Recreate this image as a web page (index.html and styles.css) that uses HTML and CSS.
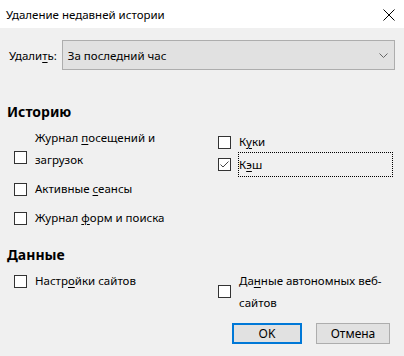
FILE: index.html
```html
<!DOCTYPE html>
<html lang="ru">
<head>
<meta charset="UTF-8" />
<title>Удаление недавней истории</title>
<link rel="stylesheet" href="styles.css">
</head>
<body>

<div class="titlebar">
  <span class="title">Удаление недавней истории</span>
  <svg class="close" width="12" height="12" viewBox="0 0 12 12">
    <path d="M0.5 0.5L11.5 11.5M11.5 0.5L0.5 11.5" stroke="#000" stroke-width="1" fill="none"/>
  </svg>
</div>

<div class="dialog">
  <div class="range-row">
    <span class="range-label">Удали<u>т</u>ь:</span>
    <div class="select">
      <span>За последний час</span>
      <svg class="chevron" width="9" height="5" viewBox="0 0 9 5">
        <path d="M0.5 0.5L4.5 4.5L8.5 0.5" stroke="#666" stroke-width="1" fill="none"/>
      </svg>
    </div>
  </div>

  <div class="section-title history-title">Историю</div>
  <div class="columns">
    <div class="column">
      <label class="item item-wrap first">
        <span class="box"></span>
        <span class="text">Журнал <u>п</u>осещений и загрузок</span>
      </label>
      <label class="item">
        <span class="box"></span>
        <span class="text">Активные <u>с</u>еансы</span>
      </label>
      <label class="item">
        <span class="box"></span>
        <span class="text">Журнал <u>ф</u>орм и поиска</span>
      </label>
    </div>
    <div class="column right">
      <label class="item cookies">
        <span class="box"></span>
        <span class="text">К<u>у</u>ки</span>
      </label>
      <label class="item cache">
        <span class="box checked">
          <svg width="11" height="11" viewBox="0 0 11 11">
            <path d="M1.5 5.5L4 8L9.5 2.5" stroke="#444" stroke-width="1" fill="none"/>
          </svg>
        </span>
        <span class="text focused">К<u>э</u>ш</span>
      </label>
    </div>
  </div>

  <div class="section-title data-title">Данные</div>
  <div class="columns">
    <div class="column">
      <label class="item site-settings">
        <span class="box"></span>
        <span class="text">Настр<u>о</u>йки сайтов</span>
      </label>
    </div>
    <div class="column right">
      <label class="item item-wrap offline">
        <span class="box"></span>
        <span class="text">Да<u>н</u>ные автономных веб-сайтов</span>
      </label>
    </div>
  </div>

  <div class="buttons">
    <button class="btn default">OK</button>
    <button class="btn">Отмена</button>
  </div>
</div>

</body>
</html>
```

FILE: styles.css
```css
body {
  margin: 0;
  font-family: 'Noto Sans', 'Open Sans', sans-serif;
  font-size: 11.5px;
  color: #000;
  background-color: #f0f0f0;
  width: 404px;
  height: 356px;
  overflow: hidden;
}

u { text-decoration-thickness: 1px; text-underline-offset: 2px; }

.titlebar {
  display: flex;
  align-items: center;
  justify-content: space-between;
  height: 28px;
  background-color: #fff;
  padding: 0 9px 0 6px;
}

.close { margin-top: 1px; }

.dialog { padding: 12px 9px 0 9px; }

.range-row {
  display: flex;
  align-items: center;
  gap: 5px;
}

.select {
  flex: 1;
  display: flex;
  align-items: center;
  justify-content: space-between;
  height: 28px;
  border: 1px solid #adadad;
  background-color: #e1e1e1;
  padding: 0 6px 0 5px;
}

.section-title {
  font-size: 14px;
  font-weight: bold;
  margin-left: -2px;
}

.history-title { margin-top: 32px; line-height: 20px; }
.data-title { margin-top: 16px; line-height: 20px; }

.columns { display: flex; }

.column {
  width: 204px;
  display: flex;
  flex-direction: column;
  padding-left: 5px;
}

.column.right { width: auto; flex: 1; padding-left: 0; }

.item {
  display: flex;
  align-items: center;
  gap: 8px;
  line-height: 22px;
  margin-top: 7px;
}

.item-wrap .text { width: 150px; }

.item.first { margin-top: 5px; }
.item.first .box { margin-top: 16px; }

.item.cookies { margin-top: 9px; }
.item.cache { margin-top: 0; }

.item.site-settings { margin-top: 5px; }
.item.offline { margin-top: 5px; }
.item.offline .box { margin-bottom: 2px; }

.box {
  flex: none;
  width: 11px;
  height: 11px;
  border: 1px solid #333;
  background-color: #fff;
  display: flex;
}

.text.focused {
  flex: 1;
  outline: 1px dotted #000;
  outline-offset: 0;
  line-height: 23px;
  margin-right: 3px;
}

.buttons {
  display: flex;
  justify-content: flex-end;
  gap: 14px;
  margin-top: 9px;
  padding-right: 5px;
}

.btn {
  width: 74px;
  height: 21px;
  font-family: inherit;
  font-size: 12px;
  background-color: #e1e1e1;
  border: 1px solid #adadad;
  padding: 0;
  color: #000;
}

.btn.default {
  width: 70px;
  border: 2px solid #0078d7;
}
```
